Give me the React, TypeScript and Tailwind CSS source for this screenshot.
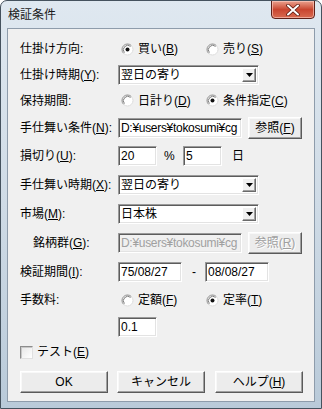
import React from "react";

const Acc = ({ c }: { c: string }) => (
  <span className="underline underline-offset-[1px] decoration-1">{c}</span>
);

function RadioIcon({ checked }: { checked?: boolean }) {
  return (
    <svg width="13" height="13" viewBox="0 0 13 13" className="shrink-0">
      <circle cx="6.5" cy="6.5" r="5.5" fill="#ffffff" />
      <path d="M2.61 10.39 A5.5 5.5 0 0 1 10.39 2.61" fill="none" stroke="#8c8c8c" strokeWidth="1" />
      <path d="M10.39 2.61 A5.5 5.5 0 0 1 2.61 10.39" fill="none" stroke="#dcdcdc" strokeWidth="1" />
      <path d="M3.4 9.6 A4.4 4.4 0 0 1 9.6 3.4" fill="none" stroke="#5a5a5a" strokeWidth="0.8" />
      {checked && <circle cx="6.5" cy="6.5" r="2" fill="#111111" />}
    </svg>
  );
}

function Radio({ checked, children, wide }: { checked?: boolean; children: React.ReactNode; wide?: boolean }) {
  return (
    <div className={"flex items-center " + (wide ? "w-[85px]" : "")}>
      <span className="ml-[3px] flex">
        <RadioIcon checked={checked} />
      </span>
      <span className="ml-[4px] whitespace-nowrap">{children}</span>
    </div>
  );
}

function TextBox({ w, value, disabled }: { w: string; value: string; disabled?: boolean }) {
  return (
    <div
      className={
        "h-[20px] flex items-center overflow-hidden whitespace-nowrap border border-t-[#9a9a9a] border-l-[#9a9a9a] border-r-[#ffffff] border-b-[#ffffff] shadow-[inset_1px_1px_0_#5c5c5c,inset_-1px_-1px_0_#e3e3e3] pl-[2px] " +
        w +
        (disabled ? " bg-[#f0f0f0] text-[#a0a0a0]" : " bg-white text-black")
      }
    >
      {value}
    </div>
  );
}

function Select({ value }: { value: string }) {
  return (
    <div className="h-[20px] w-[141px] flex items-center justify-between bg-white border border-t-[#9a9a9a] border-l-[#9a9a9a] border-r-[#ffffff] border-b-[#ffffff] shadow-[inset_1px_1px_0_#5c5c5c,inset_-1px_-1px_0_#e3e3e3] pl-[2px] pr-[2px]">
      <span className="whitespace-nowrap">{value}</span>
      <div className="w-[14px] h-[14px] flex items-center justify-center bg-[#f0f0f0] border border-t-[#ffffff] border-l-[#ffffff] border-r-[#6a6a6a] border-b-[#6a6a6a] shadow-[inset_-1px_-1px_0_#a0a0a0]">
        <svg width="7" height="4" viewBox="0 0 7 4">
          <path d="M0 0 H7 L3.5 4 Z" fill="#000" />
        </svg>
      </div>
    </div>
  );
}

function Btn({ w, h, children, disabled }: { w: string; h: string; children: React.ReactNode; disabled?: boolean }) {
  return (
    <div
      className={
        "flex items-center justify-center bg-[#ececec] border border-t-[#ffffff] border-l-[#ffffff] border-r-[#5a5a5a] border-b-[#5a5a5a] shadow-[inset_-1px_-1px_0_#a0a0a0,inset_1px_1px_0_#f8f8f8] whitespace-nowrap " +
        w +
        " " +
        h +
        (disabled ? " text-[#a0a0a0] [text-shadow:1px_1px_0_#ffffff]" : " text-black")
      }
    >
      {children}
    </div>
  );
}

function Row({ h, label, indent, children }: { h: string; label: React.ReactNode; indent?: boolean; children?: React.ReactNode }) {
  return (
    <div className={"flex items-center " + h}>
      <div className={"w-[98px] shrink-0 whitespace-nowrap " + (indent ? "pl-[13px]" : "")}>{label}</div>
      <div className="flex items-center">{children}</div>
    </div>
  );
}

export default function App() {
  return (
    <div className="w-[322px] h-[409px] flex flex-col rounded-t-[7px] border border-[#45525e] bg-gradient-to-b from-[#dfe8f0] via-[#cfdbe6] to-[#b9cad9] font-['Liberation_Sans','Noto_Sans_CJK_JP',sans-serif] text-[12px] leading-[14px] text-black overflow-hidden">
      {/* title bar */}
      <div className="h-[27px] flex items-start justify-between">
        <div className="pl-[7px] pt-[6px] text-[12px] font-['Noto_Sans_CJK_JP',sans-serif] text-[#1a1a1a]">
          検証条件
        </div>
        <div className="mr-[6px] mt-[-1px] w-[44px] h-[19px] rounded-b-[4px] border border-[#5e2018] bg-gradient-to-b from-[#e9a08e] via-[#c9452f] to-[#d86a50] flex items-center justify-center shadow-[inset_0_0_0_1px_rgba(255,210,200,0.6)]">
          <svg width="14" height="12" viewBox="0 0 14 12">
            <path d="M2 1.5 L12 10.5 M12 1.5 L2 10.5" stroke="#5a1a10" strokeWidth="3.6" strokeLinecap="round" />
            <path d="M2 1.5 L12 10.5 M12 1.5 L2 10.5" stroke="#ffffff" strokeWidth="2" strokeLinecap="round" />
          </svg>
        </div>
      </div>
      {/* client */}
      <div className="ml-[6px] w-[308px] h-[374px] bg-[#f0f0f0] border border-[#8e9cab] pt-[7px] pl-[12px] flex flex-col">
        <Row h="h-[26px]" label="仕掛け方向:">
          <Radio checked wide>
            買い(<Acc c="B" />)
          </Radio>
          <Radio>
            売り(<Acc c="S" />)
          </Radio>
        </Row>
        <Row h="h-[25px]" label={<>仕掛け時期(<Acc c="Y" />):</>}>
          <Select value="翌日の寄り" />
        </Row>
        <Row h="h-[27px]" label="保持期間:">
          <Radio wide>
            日計り(<Acc c="D" />)
          </Radio>
          <Radio checked>
            条件指定(<Acc c="C" />)
          </Radio>
        </Row>
        <Row h="h-[27px]" label={<>手仕舞い条件(<Acc c="N" />):</>}>
          <TextBox w="w-[124px] tracking-[-0.3px]" value="D:¥users¥tokosumi¥cg" />
          <div className="ml-[6px]">
            <Btn w="w-[54px]" h="h-[22px]">
              参照(<Acc c="F" />)
            </Btn>
          </div>
        </Row>
        <Row h="h-[29px]" label={<>損切り(<Acc c="U" />):</>}>
          <TextBox w="w-[39px]" value="20" />
          <span className="ml-[7px] w-[19px]">%</span>
          <TextBox w="w-[39px]" value="5" />
          <span className="ml-[10px]">日</span>
        </Row>
        <Row h="h-[29px]" label={<>手仕舞い時期(<Acc c="X" />):</>}>
          <Select value="翌日の寄り" />
        </Row>
        <Row h="h-[29px]" label={<>市場(<Acc c="M" />):</>}>
          <Select value="日本株" />
        </Row>
        <Row h="h-[30px]" indent label={<>銘柄群(<Acc c="G" />):</>}>
          <TextBox w="w-[124px] tracking-[-0.3px]" value="D:¥users¥tokosumi¥cg" disabled />
          <div className="ml-[6px]">
            <Btn w="w-[54px]" h="h-[22px]" disabled>
              参照(<Acc c="R" />)
            </Btn>
          </div>
        </Row>
        <Row h="h-[28px]" label={<>検証期間(<Acc c="I" />):</>}>
          <TextBox w="w-[64px]" value="75/08/27" />
          <span className="ml-[10px] w-[13px]">-</span>
          <TextBox w="w-[64px]" value="08/08/27" />
        </Row>
        <Row h="h-[28px]" label="手数料:">
          <Radio wide>
            定額(<Acc c="F" />)
          </Radio>
          <Radio checked>
            定率(<Acc c="T" />)
          </Radio>
        </Row>
        <Row h="h-[26px]" label="">
          <TextBox w="w-[39px]" value="0.1" />
        </Row>
        <div className="h-[24px] flex items-center">
          <div className="w-[13px] h-[13px] bg-gradient-to-br from-[#e6e6e6] to-[#ffffff] border border-t-[#8c8c8c] border-l-[#8c8c8c] border-r-[#e0e0e0] border-b-[#e0e0e0] shadow-[inset_1px_1px_0_#c8c8c8]" />
          <span className="ml-[4px]">
            テスト(<Acc c="E" />)
          </span>
        </div>
        <div className="mt-[7px] flex">
          <Btn w="w-[88px]" h="h-[22px]">OK</Btn>
          <div className="ml-[9px]">
            <Btn w="w-[88px]" h="h-[22px]">キャンセル</Btn>
          </div>
          <div className="ml-[10px]">
            <Btn w="w-[88px]" h="h-[22px]">
              ヘルプ(<Acc c="H" />)
            </Btn>
          </div>
        </div>
      </div>
    </div>
  );
}
